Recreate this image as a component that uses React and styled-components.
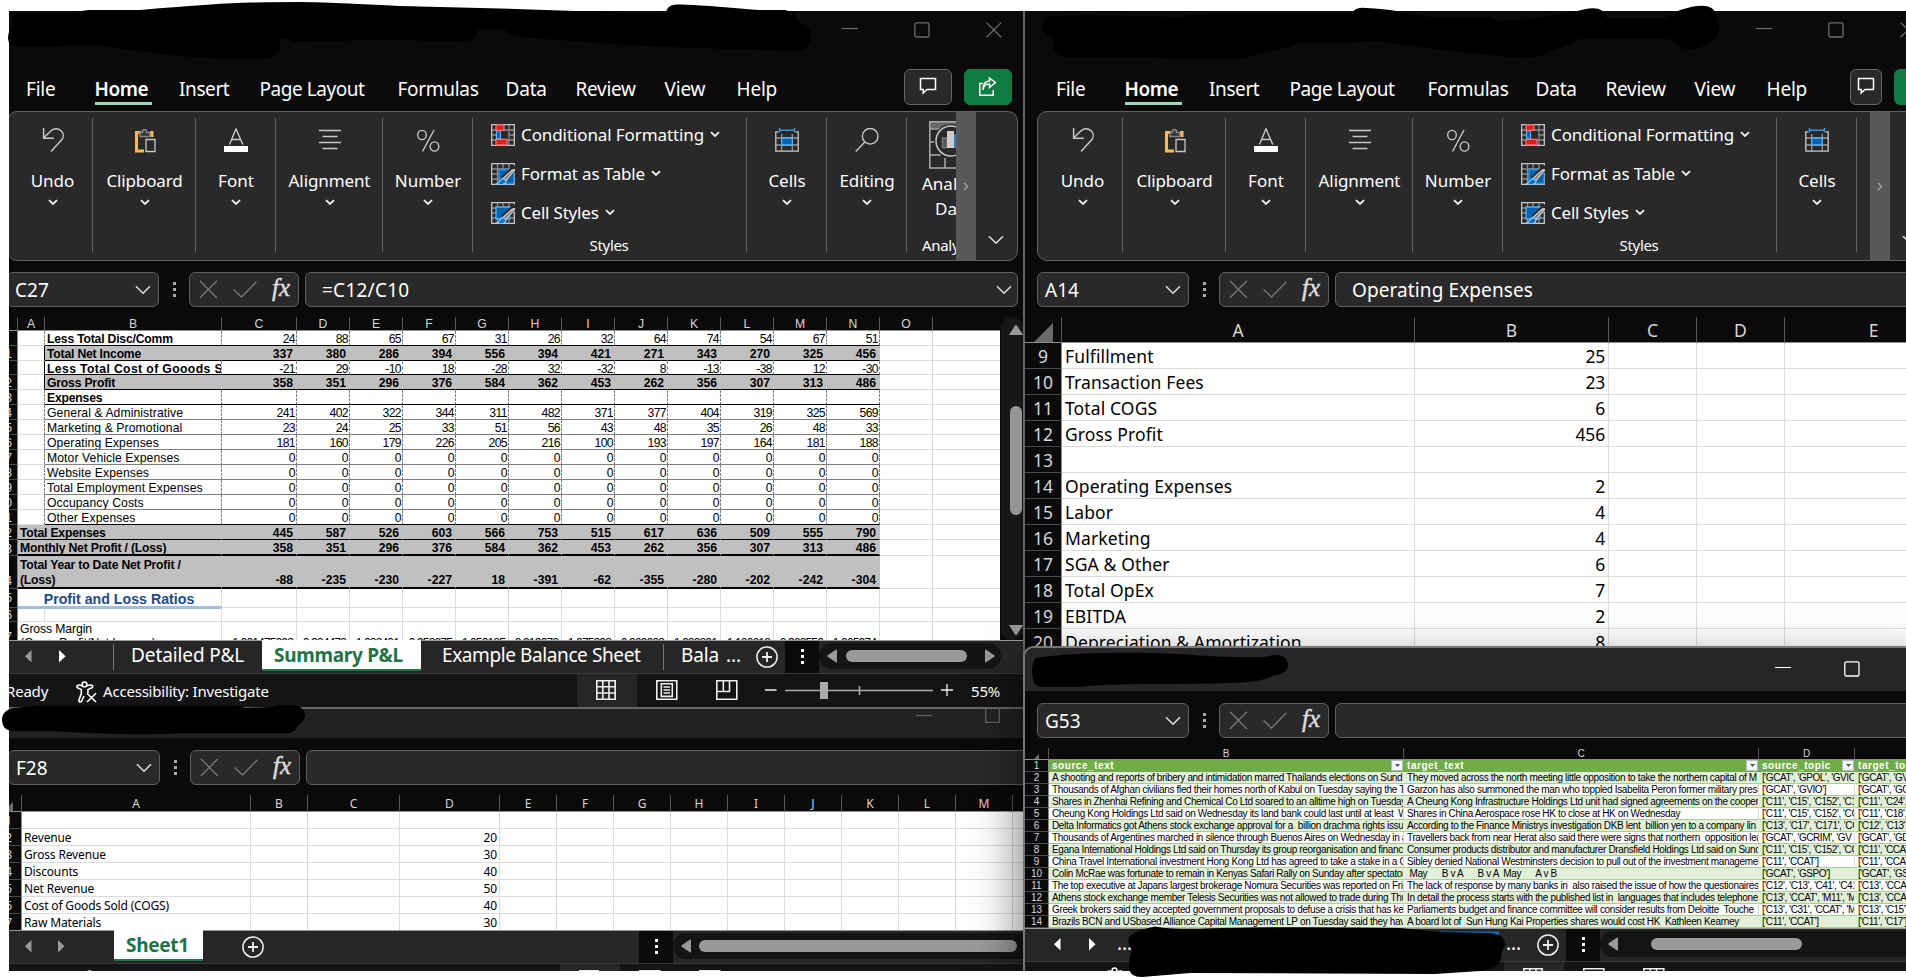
import React from "react";
import styled, { createGlobalStyle, css } from "styled-components";

const ui = '"Noto Sans", "Open Sans", sans-serif';
const arial = '"Liberation Sans", Arial, sans-serif';

const GlobalStyle = createGlobalStyle`
  html, body { margin: 0; padding: 0; background: #fff; overflow: hidden; }
  * { box-sizing: border-box; }
  svg { display: block; flex: none; }
`;

/* ---------- desktop and windows ---------- */

const Page = styled.div`
  position: relative;
  width: 1906px;
  height: 978px;
  padding: 11px 0 7px 9px;
  overflow: hidden;
  background: #fff;
  font-family: ${ui};
  color: #fff;
`;

const Desktop = styled.div`
  position: relative;
  height: 960px;
  overflow: hidden;
  background: #0a0a0a;
`;

const Window = styled.section`
  position: absolute;
  left: ${(p) => p.$x}px;
  top: ${(p) => p.$y}px;
  width: ${(p) => p.$w}px;
  height: ${(p) => p.$h}px;
  display: flex;
  flex-direction: column;
  overflow: hidden;
  background: #0a0a0a;
  border-left: 2px solid #666;
  ${(p) => p.$topEdge && css`border-top: 2px solid #666;`}
  ${(p) => p.$floating && css`
    border-color: #777;
    border-top-left-radius: 11px;
    box-shadow: 0 20px 46px 4px rgba(0, 0, 0, 0.5);
  `}
`;

const TitleBar = styled.header`
  height: ${(p) => p.$h}px;
  flex: none;
  display: flex;
  align-items: flex-start;
  padding-left: ${(p) => p.$lead}px;
  padding-top: ${(p) => p.$top}px;
  background: ${(p) => p.$bg || "transparent"};
  color: ${(p) => p.$color || "#6c6c6c"};
  overflow: hidden;
`;

const CaptionButton = styled.span`
  width: ${(p) => p.$slot || 72}px;
  flex: none;
`;

const MenuRow = styled.nav`
  height: 50px;
  flex: none;
  display: flex;
  padding: 8px 0 0 31px;
`;

const MenuTab = styled.span`
  width: ${(p) => p.$w}px;
  flex: none;
  font-size: 19px;
  line-height: 41px;
  height: 36px;
  letter-spacing: ${(p) => p.$ls || -0.2}px;
  white-space: nowrap;
`;

const ActiveTab = styled.b`
  display: inline-block;
  height: 36px;
  font-weight: 600;
  width: 57px;
  letter-spacing: -0.45px;
  background: linear-gradient(#9fd8b8, #9fd8b8) left bottom / 57px 3px no-repeat;
`;

const HeadButton = styled.span`
  width: ${(p) => p.$w}px;
  height: 36px;
  flex: none;
  display: flex;
  align-items: center;
  justify-content: center;
  margin-left: ${(p) => p.$gap}px;
  border-radius: 6px;
  border: 1px solid ${(p) => (p.$green ? "#107c41" : "#666")};
  background: ${(p) => (p.$green ? "#107c41" : "#292929")};
`;

/* ---------- ribbon ---------- */

const Ribbon = styled.div`
  height: 150px;
  flex: none;
  display: flex;
  width: ${(p) => p.$w}px;
  margin-left: 12px;
  background: #292929;
  border: 1px solid #616161;
  border-radius: 10px;
  overflow: hidden;
`;

const Group = styled.div`
  width: ${(p) => p.$w}px;
  flex: none;
  display: flex;
  flex-direction: column;
  align-items: center;
  padding: 16px 0 0 ${(p) => p.$pad || 0}px;
  background: linear-gradient(#616161, #616161) right 6px / 1px 134px no-repeat;
`;

const GroupLabel = styled.span`
  font-size: 17px;
  line-height: 24px;
  margin: 15px 0 6px;
  letter-spacing: ${(p) => p.$ls || 0}px;
  white-space: nowrap;
`;

const StylesGroup = styled.div`
  width: 274px;
  flex: none;
  display: flex;
  flex-direction: column;
  padding: 4px 0 0 18px;
  background: linear-gradient(#616161, #616161) right 6px / 1px 134px no-repeat;
`;

const StyleLine = styled.div`
  height: 39px;
  display: flex;
  align-items: center;
  font-size: 17px;
  white-space: nowrap;
  letter-spacing: ${(p) => p.$ls || 0}px;
  & > span { margin: -3px 6px 0 6px; }
  & > svg:first-child { margin-top: -2px; }
  & > svg:last-child { margin-top: -3px; }
`;

const Caption = styled.div`
  width: 100%;
  font-size: 15px;
  line-height: 20px;
  margin-top: 2px;
  letter-spacing: -0.3px;
  text-align: center;
  padding-right: 20px;
`;

const AnalyzeGroup = styled.div`
  width: 49px;
  flex: none;
  overflow: hidden;
  display: flex;
  flex-direction: column;
  padding: 9px 0 0 15px;
  font-size: 17px;
  line-height: 25px;
  white-space: nowrap;
  & > svg { margin: 0 0 2px 7px; }
`;

const Da = styled.span`padding-left: 13px;`;
const Analy = styled.span`font-size: 15px; padding-top: 12px; letter-spacing: -0.3px;`;

const Scroller = styled.div`
  width: 20px;
  flex: none;
  display: flex;
  align-items: center;
  justify-content: center;
  background: #595959;
  margin-left: ${(p) => p.$gap || 0}px;
`;

const RibbonEnd = styled.div`
  flex: 1;
  padding: 123px 0 0 12px;
`;

/* ---------- formula bar ---------- */

const FormulaBar = styled.div`
  height: 35px;
  flex: none;
  display: flex;
  margin-top: ${(p) => p.$mt}px;
  padding-left: 12px;
`;

const Box = styled.div`
  ${(p) => (p.$w ? `width: ${p.$w}px; flex: none;` : "flex: 1;")}
  height: 35px;
  display: flex;
  align-items: center;
  justify-content: space-between;
  border: 1px solid #5f5f5f;
  border-radius: 6px;
  background: #292929;
  padding: 0 ${(p) => p.$pr}px 0 ${(p) => p.$pl}px;
  font-size: 19px;
  letter-spacing: ${(p) => p.$ls || 0}px;
  margin-right: ${(p) => p.$mr || 0}px;
  white-space: nowrap;
`;

const Dots = styled.div`
  width: ${(p) => p.$w || 30}px;
  flex: none;
  display: flex;
  align-items: center;
  justify-content: center;
`;

const Fx = styled.i`
  font: italic 400 25px/30px "Liberation Serif", serif;
  color: #ddd;
  -webkit-text-stroke: 0.5px #ddd;
  letter-spacing: 0;
  padding-bottom: 4px;
`;

/* ---------- sheets ---------- */

const SheetArea = styled.div`
  display: flex;
  height: ${(p) => p.$h}px;
  margin-top: 10px;
  flex: none;
  overflow: hidden;
`;

const Sheet = styled.div`
  width: ${(p) => p.$w}px;
  flex: none;
  overflow: hidden;
  color: #000;
  background: #fff;
  font-family: ${(p) => p.$font};
  font-size: ${(p) => p.$size}px;
`;

const Row = styled.div`
  display: flex;
  height: ${(p) => p.$h}px;
`;

const HeadCell = styled.div`
  width: ${(p) => p.$w}px;
  flex: none;
  height: 100%;
  display: flex;
  align-items: flex-end;
  justify-content: center;
  background: #0a0a0a;
  color: #d6d6d6;
  border-right: 1px solid #565656;
  border-bottom: 1px solid #909090;
  overflow: hidden;
  line-height: ${(p) => p.$lh}px;
`;

const RowHead = styled.div`
  width: ${(p) => p.$w}px;
  flex: none;
  display: flex;
  align-items: center;
  justify-content: ${(p) => (p.$pr ? "flex-end" : "center")};
  padding: ${(p) => p.$pt || 0}px ${(p) => p.$pr || 0}px 0 0;
  background: #0a0a0a;
  color: #d6d6d6;
  border-right: 1px solid #8a8a8a;
  border-bottom: 1px solid #4b4b4b;
  overflow: hidden;
  white-space: nowrap;
`;

const Cell = styled.div`
  width: ${(p) => p.$w}px;
  flex: none;
  display: flex;
  align-items: ${(p) => p.$align || "center"};
  justify-content: ${(p) => (p.$num ? "flex-end" : "flex-start")};
  padding: ${(p) => p.$pt || 0}px ${(p) => p.$pr ?? 2}px 0 ${(p) => p.$pl ?? 2}px;
  white-space: pre;
  overflow: hidden;
  font-weight: ${(p) => (p.$bold ? 700 : 400)};
  letter-spacing: ${(p) => p.$ls || 0}px;
  background: ${(p) => p.$bg || "transparent"};
  border-right: 1px ${(p) => (p.$dash ? "dashed" : "solid")} ${(p) => p.$v || "#dcdcdc"};
  border-bottom: ${(p) => p.$bw || 1}px solid ${(p) => p.$b || "#dcdcdc"};
  line-height: ${(p) => p.$lh || "normal"};
  color: ${(p) => p.$color || "inherit"};
`;

const RatioTitle = styled.div`
  width: 204px;
  flex: none;
  text-align: center;
  font-weight: 700;
  font-size: 14.2px;
  line-height: 20px;
  color: #214b87;
  border-right: 1px solid #dcdcdc;
  box-shadow: 0 1px 0 #a5bde0;
  border-bottom: 2px solid #a5bde0;
  padding-right: 1px;
`;

const Filter = styled.span`
  width: 12px;
  height: 11px;
  margin-left: auto;
  display: flex;
  align-items: center;
  justify-content: center;
  background: #f6f8fb;
  border: 1px solid #b5bcc8;
`;

/* ---------- scroll bars, sheet tabs, status ---------- */

const VTrack = styled.div`
  width: 23px;
  height: 323px;
  padding: 8px 2px 5px 9px;
  display: flex;
  flex-direction: column;
  align-items: center;
  background: #171717;
  border-left: 1px solid #0a0a0a;
  border-radius: 12px;
`;

const VThumb = styled.div`
  width: 12px;
  height: 109px;
  margin: 71px 0 110px;
  border-radius: 6px;
  background: #969696;
`;

const TabBar = styled.div`
  height: 34px;
  flex: none;
  display: flex;
  padding-left: ${(p) => p.$pl}px;
  background: #262626;
  border-top: 1px solid #999;
  border-bottom: 1px solid #3a3a3a;
`;

const Arrow = styled.span`
  width: ${(p) => p.$w}px;
  flex: none;
  padding-top: 9px;
`;

const SheetTab = styled.span`
  width: ${(p) => p.$w}px;
  flex: none;
  height: 31px;
  margin-top: -1px;
  padding-left: ${(p) => p.$pl}px;
  font-size: 19px;
  line-height: 31px;
  white-space: nowrap;
  letter-spacing: ${(p) => p.$ls || -0.1}px;
  ${(p) => p.$active && css`
    background: #fff;
    color: #217346;
    font-weight: 700;
    border-bottom: 2px solid #217346;
  `}
`;

const Divider = styled.span`
  width: 1px;
  flex: none;
  height: 26px;
  margin-top: 3px;
  background: #777;
`;

const AddSheet = styled.span`
  width: ${(p) => p.$w}px;
  flex: none;
  padding: 5px 0 0 ${(p) => p.$pl}px;
`;

const Grip = styled.span`
  width: ${(p) => p.$w}px;
  flex: none;
  background: #0a0a0a;
  display: flex;
  justify-content: center;
  padding-top: 8px;
`;

const HTrack = styled.span`
  width: ${(p) => p.$w}px;
  flex: none;
  height: 26px;
  margin-top: 2px;
  display: flex;
  align-items: center;
  padding-left: 8px;
  background: #141414;
  border-radius: 13px ${(p) => (p.$open ? "0 0" : "13px 13px")} 13px;
`;

const HThumb = styled.span`
  width: ${(p) => p.$w}px;
  height: 12px;
  margin: 0 ${(p) => p.$after || 0}px 0 ${(p) => p.$before}px;
  border-radius: 6px;
  background: #999;
`;

const StatusBar = styled.footer`
  flex: 1;
  min-height: 0;
  display: flex;
  background: #141414;
  font-size: 15px;
  line-height: 34px;
  letter-spacing: -0.2px;
  white-space: nowrap;
  overflow: hidden;
`;

const StatusItem = styled.span`
  width: ${(p) => p.$w}px;
  flex: none;
  padding: ${(p) => p.$pt || 0}px 0 0 ${(p) => p.$pl || 0}px;
  background: ${(p) => (p.$on ? "#262626" : "transparent")};
`;

const Ink = styled.svg`
  position: absolute;
  left: 0;
  top: 0;
`;

/* ---------- icons ---------- */

const Line = ({ w, h, d, c = "currentColor", s = 1.3, children }) => (
  <svg width={w} height={h} viewBox={`0 0 ${w} ${h}`} fill="none" stroke={c} strokeWidth={s}>
    {d && <path d={d} />}
    {children}
  </svg>
);

const Chevron = () => <Line w={10} h={7} d="M1 1.2 L5 5 L9 1.2" c="#f2f2f2" s={1.8} />;
const WideChevron = () => <Line w={16} h={10} d="M1 1.2 L8 8.2 L15 1.2" c="#ddd" s={1.6} />;
const Minimize = () => <Line w={16} h={16} d="M0 6.5H16" s={1.2} />;
const Maximize = () => <Line w={16} h={16}><rect x="0.8" y="0.8" width="14.2" height="14.2" rx="1.6" /></Line>;
const Close = () => <Line w={16} h={16} d="M.6 .6 L15.2 15.2 M15.2 .6 L.6 15.2" />;
const Comment = () => <Line w={18} h={20} d="M1.5 1.5H16.5V12.5H8L4.2 16V12.5H1.5Z" c="#fff" s={1.5} />;
const Share = () => (
  <Line w={19} h={20} c="#fff" s={1.5} d="M5 6.5H1.8V18.2H15.2V13M5 13C5.3 8.5 8 7 11.5 7V10.5L17.4 5.5L11.5 1.2V4C7.5 4.2 5 7.5 5 13Z" />
);
const Undo = () => <Line w={24} h={26} d="M2.6 0V10.2H12.8M2.8 9.8L10 2.8C13-.1 17.5.1 20.3 3C23 5.9 22.8 9.8 20 12.6L10 23.5" c="#c8c8c8" s={1.5} />;
const Clipboard = () => (
  <Line w={24} h={26}>
    <path d="M8 4.5H3.5V23H11M17 4.5H19V9" stroke="#f7b95f" strokeWidth="3" />
    <path d="M7 8.5V4.5H9.5V3.5C9.5 .8 13.5 .8 13.5 3.5V4.5H16.8V8.5Z" fill="#333" stroke="#858585" strokeWidth="1.6" />
    <path d="M13 11.5H22V23.5H13Z" fill="#292929" stroke="#c8c8c8" />
  </Line>
);
const FontIcon = () => (
  <Line w={24} h={26} c="#c8c8c8" s={1.4}>
    <path d="M5.5 16.5L12 .8L18.8 16.5M7.8 11.5H16.5" />
    <path d="M0 21H24" stroke="#fff" strokeWidth="6" />
  </Line>
);
const AlignIcon = () => <Line w={24} h={26} d="M1 2.5H23M4.5 8.5H19.5M1 14.5H23M4.5 20.5H19.5" c="#c8c8c8" s={1.4} />;
const Percent = () => (
  <Line w={24} h={26} c="#c8c8c8" s={1.4}>
    <ellipse cx="6" cy="7" rx="4.3" ry="4.6" /><ellipse cx="18.5" cy="18.5" rx="4.3" ry="4.6" /><path d="M18 2L6.5 23.5" />
  </Line>
);
const CellsIcon = () => (
  <Line w={24} h={26} c="#9a9a9a">
    <path d="M.8 10H23.2M.8 17H23.2M6.7 6V23M17.3 6V23" />
    <path d="M3.5 3.8H.8V23.2H23.2V3.8H20.5" stroke="#c8c8c8" />
    <path d="M4.5 2.2H19.5M4.5 0V4.6M19.5 0V4.6" stroke="#3a96dd" strokeWidth="1.5" />
    <path d="M6.7 10H17.3V17H6.7Z" fill="#0063b1" stroke="#5eb0ef" />
  </Line>
);
const SearchIcon = () => <Line w={24} h={26} c="#c8c8c8" s={1.4}><circle cx="15.2" cy="8.3" r="7.8" /><path d="M9.8 14L.8 23.4" /></Line>;
const Grid24 = ({ children }) => (
  <Line w={24} h={22} c="#8c8c8c">
    <path d="M1 6H23M1 11H23M1 16H23M6.5 1V21M12 1V21M18 1V21" />
    <path d="M.7 .7H23.3V21.3H.7Z" stroke="#c8c8c8" />
    {children}
  </Line>
);
const Conditional = () => (
  <Grid24>
    <path d="M5.5 6.5H9.5V15H5.5Z" fill="#0063b1" stroke="#5eb0ef" />
    <path d="M10.2 7H17V14.5H10.2Z" fill="#292929" stroke="none" />
    <path d="M5 .8H13V6.4H5Z M5 15.4H16V21H5Z" fill="#dc2016" stroke="#f1707b" />
  </Grid24>
);
const Brush = () => (
  <>
    <path d="M25 4L12.5 16" stroke="#292929" strokeWidth="6" />
    <path d="M23.8 7L14.5 18L12 15.5L21 7.3Q23 6 23.8 7Z" fill="#777" stroke="#d0d0d0" />
    <path d="M12.5 15.5C9.5 15.5 9.5 19.5 5.8 20.3C9.5 22.6 15.3 21.8 15 17.8Z" fill="#0f6cbd" stroke="#83c5f7" />
  </>
);
const TableIcon = () => <Grid24><path d="M8 6.5H23V20.5H8Z" fill="#0063b1" stroke="#3a96dd" /><Brush /></Grid24>;
const CellStyleIcon = () => <Grid24><path d="M5 5H19V17H5Z" fill="#0063b1" stroke="#5eb0ef" /><Brush /></Grid24>;
const AnalyzeIcon = () => (
  <svg width="50" height="48" viewBox="0 0 50 48" fill="none" stroke="#c8c8c8" strokeWidth="1.5">
    <path d="M1 1H50V7H1Z" fill="#666" stroke="none" />
    <path d="M50 .8H.8V47H50M.8 8H12M.8 21H8M.8 34H12M16 37V47" stroke="#aaa" />
    <circle cx="22" cy="20" r="17" fill="#292929" stroke="none" />
    <circle cx="22" cy="20" r="15" />
    <path d="M13.5 17H18V26.5H13.5Z" fill="#555" stroke="#777" />
    <path d="M18 10H25V27H18Z" fill="#ccc" stroke="none" />
    <path d="M26 14H31V26.5H26Z" fill="#0063b1" stroke="#3a96dd" />
  </svg>
);
const DotColumn = ({ c = "#fff" }) => (
  <svg width="3" height="16" viewBox="0 0 3 16" fill={c}><path d="M0 0H3V3H0Z M0 6H3V9H0Z M0 12H3V15H0Z" /></svg>
);
const Tri = ({ left, c }) => (
  <svg width="7" height="13" viewBox="0 0 7 13" fill={c}><path d={left ? "M6.5 0V12.5L0 6.3Z" : "M0 0V12.5L6.5 6.3Z"} /></svg>
);
const BigTri = ({ left }) => (
  <svg width="11" height="14" viewBox="0 0 11 14" fill="#999"><path d={left ? "M10 1.5V12.5Q10 14 8.8 13.3L1 8Q-.2 7 1 6L8.8 .7Q10 0 10 1.5Z" : "M1 1.5V12.5Q1 14 2.2 13.3L10 8Q11.2 7 10 6L2.2 .7Q1 0 1 1.5Z"} /></svg>
);
const VTri = ({ down }) => (
  <svg width="14" height="10" viewBox="0 0 14 10" fill="#969696"><path d={down ? "M0 0H14L8 9.5Q7 10.4 6 9.5Z" : "M0 10H14L8 .5Q7-.4 6 .5Z"} /></svg>
);
const PlusCircle = () => <Line w={22} h={22} c="#f0f0f0" s={1.5}><circle cx="11" cy="11" r="10.1" /><path d="M11 6V16M6 11H16" strokeWidth="1.8" /></Line>;
const Corner = ({ s }) => <svg width={s} height={s} viewBox="0 0 10 10" fill="#6a6a6a"><path d="M10 0V10H0Z" /></svg>;
const NormalView = () => <Line w={20} h={20} c="#eee" s={1.6} d="M.8 .8H19.2V19.2H.8ZM.8 6.8H19.2M.8 13H19.2M6.8 .8V19.2M13 .8V19.2" />;
const PageView = () => <Line w={22} h={20} c="#eee" s={1.6} d="M.8 .8H20.8V19.2H.8ZM5.3 3.8H16.3V16.4H5.3ZM7.5 7H14M7.5 10H14M7.5 13H14" />;
const BreakView = () => <Line w={22} h={20} c="#eee" s={1.6} d="M.8 .8H20.8V19.2H.8ZM.8 11.5H13.5V.8M7.3 .8V11.5" />;
const Person = () => (
  <Line w={22} h={22} c="#fff" s={1.6}>
    <circle cx="9.5" cy="3.4" r="2.4" />
    <path d="M6.8 4.8C3 2.8 .6 5.3 2.5 6.8L6.3 8.6V12.5L4 19C3.6 21.6 6.3 21.8 7.2 19L9 15M12.3 4.8C16.5 2.8 19.2 5.3 17 6.8L13 8.6V12M12 12.2L21 21M21 12.2L12 21" />
  </Line>
);
const Zoom = () => (
  <Line w={190} h={20} c="#aaa" s={1.6}>
    <path d="M20 11.5H168M94.5 7V16" /><path d="M55 3H63V20H55Z" fill="#aaa" stroke="none" />
    <path d="M0 11H11.5M176 11H188M182 5V17" stroke="#eee" strokeWidth="1.3" />
  </Line>
);

/* ---------- shared window parts ---------- */

const menu = [["File", 68.5], ["Home", 84.5], ["Insert", 80.5, -0.4], ["Page Layout", 138, -0.45], ["Formulas", 108, -0.3], ["Data", 70], ["Review", 89, -0.3], ["View", 72], ["Help", 40]];

const Menu = ({ gap, commentWidth, shareGap }) => (
  <MenuRow>
    {menu.map(([t, w, ls]) => (
      <MenuTab key={t} $w={w} $ls={ls}>{t === "Home" ? <ActiveTab>{t}</ActiveTab> : t}</MenuTab>
    ))}
    <HeadButton $w={commentWidth} $gap={gap}><Comment /></HeadButton>
    <HeadButton $w={48} $gap={shareGap} $green><Share /></HeadButton>
  </MenuRow>
);

const RibbonGroup = ({ w, pad, label, icon, ls }) => (
  <Group $w={w} $pad={pad}>{icon}<GroupLabel $ls={ls}>{label}</GroupLabel><Chevron /></Group>
);

const RibbonBar = ({ width, full }) => (
  <Ribbon $w={width}>
    <RibbonGroup w={85} pad={4} label="Undo" icon={<Undo />} />
    <RibbonGroup w={103} label="Clipboard" icon={<Clipboard />} ls={-0.15} />
    <RibbonGroup w={80} label="Font" icon={<FontIcon />} />
    <RibbonGroup w={107} label="Alignment" icon={<AlignIcon />} ls={-0.1} />
    <RibbonGroup w={90} label="Number" icon={<Percent />} />
    <StylesGroup>
      <StyleLine $ls={-0.1}><Conditional /><span>Conditional Formatting</span><Chevron /></StyleLine>
      <StyleLine $ls={-0.15}><TableIcon /><span>Format as Table</span><Chevron /></StyleLine>
      <StyleLine $ls={-0.2}><CellStyleIcon /><span>Cell Styles</span><Chevron /></StyleLine>
      <Caption>Styles</Caption>
    </StylesGroup>
    <RibbonGroup w={80} label="Cells" icon={<CellsIcon />} />
    {full && <RibbonGroup w={80} label="Editing" icon={<SearchIcon />} ls={-0.1} />}
    {full && (
      <AnalyzeGroup><AnalyzeIcon /><span>Analyze</span><Da>Data</Da><Analy>Analysis</Analy></AnalyzeGroup>
    )}
    <Scroller $gap={full ? 0 : 13}><Line w={6} h={9} d="M1 .8L4.6 4.5L1 8.2" c="#aaa" s={1.2} /></Scroller>
    <RibbonEnd><WideChevron /></RibbonEnd>
  </Ribbon>
);

const Formula = ({ mt, name, children, closed }) => (
  <FormulaBar $mt={mt}>
    <Box $w={152} $pl={7} $pr={7}>{name}<WideChevron /></Box>
    <Dots><DotColumn c="#aaa" /></Dots>
    <Box $w={110} $pl={9} $pr={8} $mr={6}>
      <Line w={19} h={19} d="M.8 .8L18 18M18 .8L.8 18" c="#757575" s={1.4} />
      <Line w={24} h={17} d="M.6 8.5L8.5 16L23.4 .8" c="#757575" s={1.4} />
      <Fx>fx</Fx>
    </Box>
    <Box $pl={16} $pr={5} $ls={closed ? 0.25 : 0.1} $mr={closed ? 5 : -12}>{children}{closed && <WideChevron />}</Box>
  </FormulaBar>
);

/* ---------- profit and loss sheet ---------- */

const G = "#808080";
const K = "#000";
const pl = [
  [15, "", "Less Total Disc/Comm", "label", "24 88 65 67 31 26 32 64 74 54 67 51", K],
  [15, "11", "Total Net Income", "total", "337 380 286 394 556 394 421 271 343 270 325 456", K],
  [14, "", "Less Total Cost of Gooods S", "wide", "-21 29 -10 18 -28 32 -32 8 -13 -38 12 -30", K],
  [15, "12", "Gross Profit", "total", "358 351 296 376 584 362 453 262 356 307 313 486", K],
  [15, "13", "Expenses", "label", "", K],
  [15, "14", "General & Administrative", "", "241 402 322 344 311 482 371 377 404 319 325 569", G],
  [15, "15", "Marketing & Promotional", "", "23 24 25 33 51 56 43 48 35 26 48 33", G],
  [15, "16", "Operating Expenses", "", "181 160 179 226 205 216 100 193 197 164 181 188", G],
  [15, "17", "Motor Vehicle Expenses", "", "0 0 0 0 0 0 0 0 0 0 0 0", G],
  [15, "18", "Website Expenses", "", "0 0 0 0 0 0 0 0 0 0 0 0", G],
  [15, "19", "Total Employment Expenses", "", "0 0 0 0 0 0 0 0 0 0 0 0", G],
  [15, "20", "Occupancy Costs", "", "0 0 0 0 0 0 0 0 0 0 0 0", G],
  [15, "21", "Other Expenses", "", "0 0 0 0 0 0 0 0 0 0 0 0", K],
  [15, "22", "Total Expenses", "sum", "445 587 526 603 566 753 515 617 636 509 555 790", K],
  [16, "23", "Monthly Net Profit / (Loss)", "sum", "358 351 296 376 584 362 453 262 356 307 313 486", K],
  [33, "24", "Total Year to Date Net Profit /\n(Loss)", "sum", "-88 -235 -230 -227 18 -391 -62 -355 -280 -202 -242 -304", K],
];
const ratios = "1.061475093 0.924473 1.033401 0.953375 1.050185 0.919673 1.075393 0.969033 1.039301 1.130613 0.963550 1.065974".split(" ");
const months = [75, ...Array(11).fill(53)];

const ProfitRow = ({ row: [h, n, label, kind, values, line] }) => {
  const sum = kind === "sum";
  const gray = sum || kind === "total";
  const vals = values ? values.split(" ") : Array(12).fill("");
  const tall = h === 33;
  const bw = h >= 16 ? 2 : 1;
  return (
    <Row $h={h}>
      <RowHead $w={23} $pr={5} $pt={tall ? 18 : 2}>{n}</RowHead>
      {!sum && <Cell $w={27} $v={gray || kind === "wide" ? K : G} $dash={!gray && kind !== "wide"} />}
      <Cell
        $w={sum ? 204 : 177} $bold={kind !== ""} $bg={gray ? "#c0c0c0" : "#fff"} $b={line} $bw={bw} $pt={2}
        $v={gray ? "#c0c0c0" : G} $dash={!gray} $ls={kind === "wide" ? 0.38 : kind ? -0.2 : 0.08} $lh={tall ? "15px" : "14px"}
      >{label}</Cell>
      {vals.map((v, i) => (
        <Cell
          key={i} $w={months[i]} $num $bold={gray} $bg={gray ? "#c0c0c0" : "#fff"} $b={line} $bw={bw} $lh={tall ? "13px" : "14px"} $pt={tall ? 0 : 2}
          $v={gray ? "#c0c0c0" : G} $dash={!gray} $ls={gray ? 0 : -0.6} $pr={gray ? 3 : 1} $align={tall ? "flex-end" : "center"}
        >{v}</Cell>
      ))}
      <Cell $w={53} /><Cell $w={70} $v="transparent" />
    </Row>
  );
};

const ProfitSheet = () => (
  <SheetArea $h={323}>
    <Sheet $w={1005} $font={arial} $size={12.2}>
      <Row $h={14}>
        <HeadCell $w={23} $lh={13}><Corner s={6} /></HeadCell>
        {[["A", 27], ["B", 177], ["C", 75], ..."DEFGHIJKLMNO".split("").map((c) => [c, 53]), ["", 80]].map(([c, w]) => (
          <HeadCell key={c} $w={w} $lh={12}>{c}</HeadCell>
        ))}
      </Row>
      {pl.map((r) => <ProfitRow key={r[2]} row={r} />)}
      <Row $h={19}>
        <RowHead $w={23} $pr={5}>25</RowHead>
        <RatioTitle>Profit and Loss Ratios</RatioTitle>
        {months.map((w, i) => <Cell key={i} $w={w} />)}<Cell $w={53} /><Cell $w={70} />
      </Row>
      <Row $h={14}>
        <RowHead $w={23} $pr={5}>26</RowHead>
        <Cell $w={27} /><Cell $w={177} />
        {months.map((w, i) => <Cell key={i} $w={w} />)}<Cell $w={53} /><Cell $w={70} />
      </Row>
      <Row $h={30}>
        <RowHead $w={23} $pr={5}>27</RowHead>
        <Cell $w={204} $lh="14px" $align="flex-start" $ls={-0.1}>{"Gross Margin\n(Gross Profit/Net Income)"}</Cell>
        {months.map((w, i) => <Cell key={i} $w={w} $num $align="flex-end" $lh="16px" $pr={3} $ls={-0.95}>{ratios[i]}</Cell>)}
        <Cell $w={53} /><Cell $w={70} />
      </Row>
    </Sheet>
    <VTrack><VTri /><VThumb /><VTri down /></VTrack>
  </SheetArea>
);

const StatusIcons = () => (
  <>
    <StatusItem $w={60} $pl={19} $pt={6} $on><NormalView /></StatusItem>
    <StatusItem $w={60} $pl={19} $pt={6}><PageView /></StatusItem>
    <StatusItem $w={68} $pl={19} $pt={6}><BreakView /></StatusItem>
  </>
);

const ProfitWindow = () => (
  <Window $x={-16} $y={0} $w={1030} $h={696}>
    <TitleBar $h={50} $lead={847} $top={11}>
      <CaptionButton><Minimize /></CaptionButton><CaptionButton><Maximize /></CaptionButton><Close />
    </TitleBar>
    <Menu gap={127} commentWidth={48} shareGap={12} />
    <RibbonBar width={1011} full />
    <Formula mt={11} name="C27" closed>=C12/C10</Formula>
    <ProfitSheet />
    <TabBar $pl={30}>
      <Arrow $w={34}><Tri left c="#999" /></Arrow>
      <Arrow $w={54}><Tri c="#fff" /></Arrow>
      <Divider />
      <SheetTab $w={148} $pl={17}>Detailed P&amp;L</SheetTab>
      <SheetTab $w={159} $pl={12} $ls={-0.3} $active>Summary P&amp;L</SheetTab>
      <SheetTab $w={242} $pl={21} $ls={-0.4}>Example Balance Sheet</SheetTab>
      <Divider />
      <SheetTab $w={62} $pl={17}>Bala</SheetTab>
      <SheetTab $w={30} $pl={0}>...</SheetTab>
      <AddSheet $w={29} $pl={0}><PlusCircle /></AddSheet>
      <Grip $w={34}><DotColumn /></Grip>
      <HTrack $w={182}><BigTri left /><HThumb $w={121} $before={8} $after={17} /><BigTri /></HTrack>
    </TabBar>
    <StatusBar>
      <StatusItem $w={70} $pl={11}>Ready</StatusItem>
      <StatusItem $w={26} $pl={10} $pt={7}><Person /></StatusItem>
      <StatusItem $w={486} $pl={12}>Accessibility: Investigate</StatusItem>
      <StatusIcons />
      <StatusItem $w={206} $pt={5}><Zoom /></StatusItem>
      <span>55%</span>
    </StatusBar>
  </Window>
);

/* ---------- revenue sheet (lower left) ---------- */

const revenue = [["", ""], ["Revenue", 20], ["Gross Revenue", 30], ["Discounts", 40], ["Net Revenue", 50], ["Cost of Goods Sold (COGS)", 40], ["Raw Materials", 30]];
const revenueCols = [["A", 229], ["B", 57], ["C", 92], ["D", 100], ..."EFGHIJKLM".split("").map((c) => [c, 57]), ["N", 57]];

const RevenueWindow = () => (
  <Window $x={-15} $y={696} $w={1030} $h={264} $topEdge>
    <TitleBar $h={29} $lead={920} $top={0} $bg="#222" $color="#606060">
      <CaptionButton $slot={69}><Minimize /></CaptionButton><Line w={15} h={15} d="M.7 0V13.3H14.3V0" />
    </TitleBar>
    <Formula mt={12} name="F28" />
    <SheetArea $h={135}>
      <Sheet $w={1030} $font={ui} $size={12}>
        <Row $h={17}>
          <HeadCell $w={26} $lh={16}><Corner s={9} /></HeadCell>
          {revenueCols.map(([c, w]) => <HeadCell key={c} $w={w} $lh={15}>{c === "N" ? "" : c}</HeadCell>)}
        </Row>
        {revenue.map(([label, v], r) => (
          <Row $h={17} key={r}>
            <RowHead $w={26} $pr={9}>{r + 1}</RowHead>
            {revenueCols.map(([c, w]) => (
              <Cell key={c} $w={w} $num={c === "D"} $pr={2} $ls={-0.15} $lh="15px">{c === "A" ? label : c === "D" ? v : ""}</Cell>
            ))}
          </Row>
        ))}
      </Sheet>
    </SheetArea>
    <TabBar $pl={29}>
      <Arrow $w={33}><Tri left c="#999" /></Arrow>
      <Arrow $w={56}><Tri c="#999" /></Arrow>
      <SheetTab $w={89} $pl={12} $ls={-0.3} $active>Sheet1</SheetTab>
      <AddSheet $w={436} $pl={39}><PlusCircle /></AddSheet>
      <Grip $w={34}><DotColumn /></Grip>
      <HTrack $w={350} $open><BigTri left /><HThumb $w={318} $before={7} /></HTrack>
    </TabBar>
    <StatusBar>
      <StatusItem $w={72} /><StatusItem $w={492} $pl={12} $pt={6}><Person /></StatusItem>
      <StatusIcons />
    </StatusBar>
  </Window>
);

/* ---------- operating sheet (upper right) ---------- */

const operating = [["Fulfillment", 25], ["Transaction Fees", 23], ["Total COGS", 6], ["Gross Profit", 456], ["", ""], ["Operating Expenses", 2], ["Labor", 4], ["Marketing", 4], ["SGA & Other", 6], ["Total OpEx", 7], ["EBITDA", 2], ["Depreciation & Amortization", 8]];
const operatingCols = [["A", 353], ["B", 194], ["C", 88], ["D", 88], ["E", 178]];

const OperatingWindow = () => (
  <Window $x={1014} $y={0} $w={900} $h={696}>
    <TitleBar $h={50} $lead={731} $top={11}>
      <CaptionButton><Minimize /></CaptionButton><CaptionButton><Maximize /></CaptionButton><Close />
    </TitleBar>
    <Menu gap={43} commentWidth={32} shareGap={12} />
    <RibbonBar width={911} />
    <Formula mt={11} name="A14">Operating Expenses</Formula>
    <SheetArea $h={345}>
      <Sheet $w={900} $font={ui} $size={17.5}>
        <Row $h={26}>
          <HeadCell $w={37} $lh={24}><Corner s={19} /></HeadCell>
          {operatingCols.map(([c, w]) => <HeadCell key={c} $w={w} $lh={24}>{c}</HeadCell>)}
        </Row>
        {operating.map(([label, v], r) => (
          <Row $h={26} key={r}>
            <RowHead $w={37} $pt={1}>{r + 9}</RowHead>
            {operatingCols.map(([c, w]) => (
              <Cell key={c} $w={w} $num={c === "B"} $pl={3} $pr={3} $pt={1} $ls={c === "A" ? 0.12 : -0.2} $lh="24px">{c === "A" ? label : c === "B" ? v : ""}</Cell>
            ))}
          </Row>
        ))}
      </Sheet>
    </SheetArea>
  </Window>
);

/* ---------- news sheet (lower right) ---------- */

const news = [
  ["A shooting and reports of bribery and intimidation marred Thailands elections on Sund", "They moved across the north meeting little opposition to take the northern capital of M", "['GCAT', 'GPOL', 'GVIO", "['GCAT', 'GVIO']"],
  ["Thousands of Afghan civilians fled their homes north of Kabul on Tuesday saying the T", "Garzon has also summoned the man who toppled Isabelita Peron former military presid", "['GCAT', 'GVIO']", "['GCAT', 'GCRIM']"],
  ["Shares in Zhenhai Refining and Chemical Co Ltd soared to an alltime high on Tuesday", "A Cheung Kong Infrastructure Holdings Ltd unit had signed agreements on the coopera", "['C11', 'C15', 'C152', 'C18", "['C11', 'C24', 'CCAT']"],
  ["Cheung Kong Holdings Ltd said on Wednesday its land bank could last until at least  We", "Shares in China Aerospace rose HK to close at HK on Wednesday", "['C11', 'C15', 'C152', 'CCA", "['C11', 'C18', 'CCAT']"],
  ["Delta Informatics got Athens stock exchange approval for a  billion drachma rights issu", "According to the Finance Ministrys investigation DKB lent  billion yen to a company lin", "['C13', 'C17', 'C171', 'CCA", "['C12', 'C13', 'CCAT']"],
  ["Thousands of Argentines marched in silence through Buenos Aires on Wednesday in a", "Travellers back from near Herat also said there were signs that northern  opposition lea", "['GCAT', 'GCRIM', 'GV", "['GCAT', 'GDIP']"],
  ["Egana International Holdings Ltd said on Thursday its group reorganisation and financi", "Consumer products distributor and manufacturer Dransfield Holdings Ltd said on Sund", "['C11', 'C15', 'C152', 'CCA", "['C11', 'CCAT']"],
  ["China Travel International investment Hong Kong Ltd has agreed to take a stake in a C", "Sibley denied National Westminsters decision to pull out of the investment manageme", "['C11', 'CCAT']", "['C11', 'CCAT']"],
  ["Colin McRae was fortunate to remain in Kenyas Safari Rally on Sunday after spectator", " May      B v A      B v A  May      A v B", "['GCAT', 'GSPO']", "['GCAT', 'GSPO']"],
  ["The top executive at Japans largest brokerage Nomura Securities was reported on Frid", "The lack of response by many banks in  also raised the issue of how the questionaires", "['C12', 'C13', 'C41', 'C411", "['C13', 'CCAT']"],
  ["Athens stock exchange member Telesis Securities was not allowed to trade during Thu", "In detail the process starts with the published list in  languages that includes telephone n", "['C13', 'CCAT', 'M11', 'M", "['C13', 'CCAT']"],
  ["Greek brokers said they accepted government proposals to defuse a crisis that has ke", "Parliaments budget and finance committee will consider results from Deloitte  Touche", "['C13', 'C31', 'CCAT', 'M", "['C13', 'C15']"],
  ["Brazils BCN and USbased Alliance Capital Management LP on Tuesday said they have", "A board lot of  Sun Hung Kai Properties shares would cost HK  Kathleen Kearney", "['C11', 'CCAT']", "['C11', 'C17']"],
];
const newsCols = [["B", 355, "source_text"], ["C", 355, "target_text"], ["D", 96, "source_topic"], ["", 96, "target_topic"]];

const NewsWindow = () => (
  <Window $x={1014} $y={635} $w={900} $h={333} $topEdge $floating>
    <TitleBar $h={43} $lead={750} $top={13} $bg="#262626" $color="#fff">
      <CaptionButton $slot={69}><Minimize /></CaptionButton><Maximize />
    </TitleBar>
    <Formula mt={12} name="G53" />
    <SheetArea $h={180}>
      <Sheet $w={900} $font={arial} $size={10}>
        <Row $h={12}>
          <HeadCell $w={24} $lh={11}><Corner s={5} /></HeadCell>
          {newsCols.map(([c, w]) => <HeadCell key={c} $w={w} $lh={11}>{c}</HeadCell>)}
        </Row>
        <Row $h={12}>
          <RowHead $w={24}>1</RowHead>
          {newsCols.map(([c, w, t], i) => (
            <Cell key={c} $w={w} $bold $bg="#70ad47" $v="#70ad47" $b="#70ad47" $color="#fff" $pr={0} $pl={3} $ls={0.55} $lh="11px">
              {t}{i < 3 && <Filter><svg width="5" height="3" fill="#555"><path d="M0 0H5L2.5 3Z" /></svg></Filter>}
            </Cell>
          ))}
        </Row>
        {news.map((cells, r) => (
          <Row $h={12} key={r}>
            <RowHead $w={24}>{r + 2}</RowHead>
            {cells.map((t, i) => (
              <Cell key={i} $w={newsCols[i][1]} $pl={3} $pr={0} $ls={i < 2 ? -0.35 : -0.42} $b="#a9d08e" $v={r % 2 ? "#d8d8d8" : "#e2efda"} $bg={r % 2 ? "#fff" : "#e2efda"} $lh="11px">{t}</Cell>
            ))}
          </Row>
        ))}
      </Sheet>
    </SheetArea>
    <TabBar $pl={29}>
      <Arrow $w={35}><Tri left c="#fff" /></Arrow>
      <Arrow $w={28}><Tri c="#fff" /></Arrow>
      <SheetTab $w={389} $pl={0}>...</SheetTab>
      <SheetTab $w={31} $pl={0}>...</SheetTab>
      <AddSheet $w={29} $pl={0}><PlusCircle /></AddSheet>
      <Grip $w={34}><DotColumn /></Grip>
      <HTrack $w={330} $open><BigTri left /><HThumb $w={151} $before={32} /></HTrack>
    </TabBar>
    <StatusBar>
      <StatusItem $w={479} $pl={80} $pt={5}><Person /></StatusItem>
      <StatusIcons />
    </StatusBar>
  </Window>
);

const strokes = [
  "M13 27Q11 15 18 13.5L78 12.5Q84 9.5 90 10H140Q220 3 250 2.5T300 2T400 6L500 8.5L666 14Q666 5 676 4.5T710 6L758 10H785Q796 12 799 23Q811 25 811 36Q810 51 795 51L700 48L640 46L530 38Q506 37 505 29H478Q476 41 466 42L380 39.5L300 42Q292 42 288 39H280Q284 57 262 59Q220 60 160 54L90 44.5L50 47H18Q8 47 8 38Q8 30 13 27Z",
  "M1046 36Q1039 22 1048 17Q1060 14 1180 17L1190 15L1225 12.5H1353Q1355 7 1366 8Q1385 9 1396 11L1430 17H1490Q1495 21 1500 21L1530 19L1574 12Q1604 2 1606 18H1665L1680 10Q1718 -2 1716 20Q1724 32 1711 43Q1689 54 1678 46Q1675 41 1668 39H1580L1570 44L1540 56Q1530 59 1510 57L1440 50L1375 41Q1340 44 1298 43Q1290 48 1275 50L1245 58Q1215 61 1140 57H1065Q1050 55 1053 38Z",
  "M12 731Q2 730 2 720T14 708Q35 705 55 705.5H230Q240 705 245 708L270 707Q305 700 305 716Q304 722 298 725Q295 734 285 733.5H180Q130 736 50 731Z",
  "M1033 680Q1030 664 1036 658Q1060 654 1100 653T1180 654Q1230 658 1265 657Q1288 650 1288 667Q1285 675 1272 676Q1263 682 1230 683T1150 684T1080 687H1042Q1034 686 1033 680Z",
  "M1132 950Q1127 944 1129 937Q1136 930 1155 926.5Q1175 930 1200 929Q1260 926 1400 928L1440 932L1490 933Q1505 934 1505 946Q1501 951 1501 958Q1500 968 1480 971L1435 974L1190 973L1142 977Q1129 977 1129 967Q1129 957 1132 950Z",
];

export default function App() {
  return (
    <>
      <GlobalStyle />
      <Page>
        <Desktop>
          <ProfitWindow />
          <RevenueWindow />
          <OperatingWindow />
          <NewsWindow />
        </Desktop>
        <Ink width="1906" height="978" viewBox="0 0 1906 978">
          <path d="M1440 931.5H1499V940H1440Z" fill="#0f6cbd" />
          {strokes.map((d) => <path key={d} d={d} fill="#000" />)}
        </Ink>
      </Page>
    </>
  );
}
